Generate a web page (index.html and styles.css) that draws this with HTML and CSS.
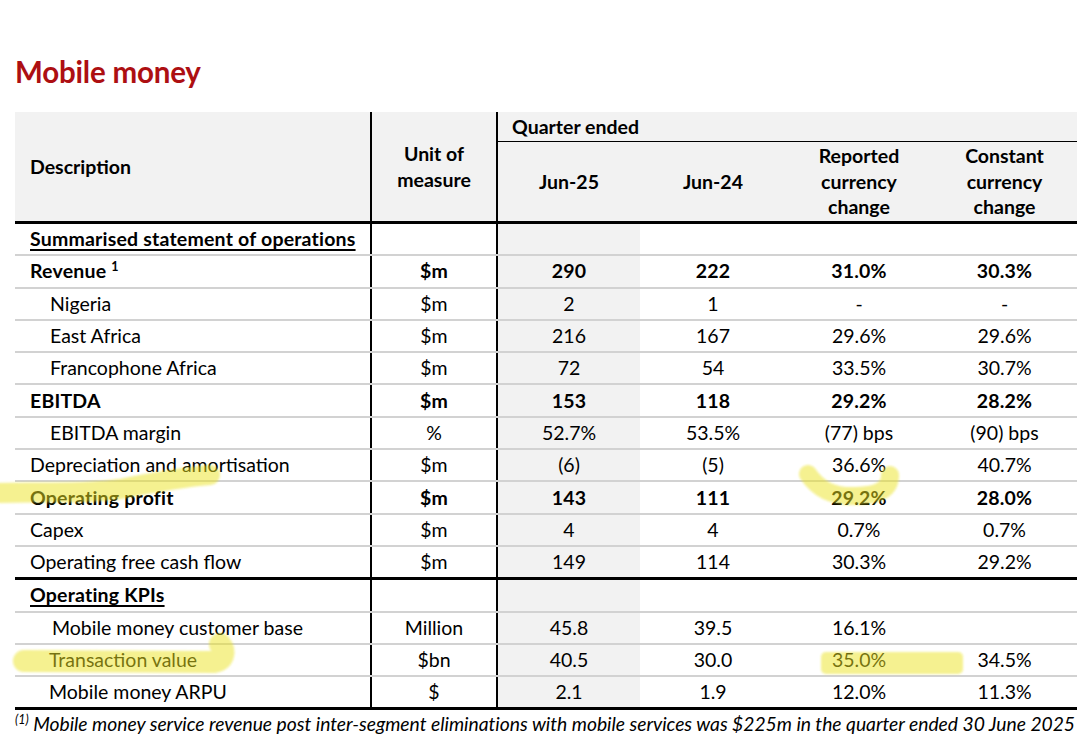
FILE: index.html
```html
<!DOCTYPE html>
<html>
<head>
<meta charset="utf-8">
<link rel="stylesheet" href="styles.css">
</head>
<body>
<div class="page">
  <h1 class="title">Mobile money</h1>
  <table class="mm">
    <colgroup>
      <col class="c-desc"><col class="c-unit"><col class="c-n"><col class="c-n2"><col class="c-n2"><col class="c-n3">
    </colgroup>
    <thead>
      <tr class="h1">
        <th rowspan="2" class="desc">Description</th>
        <th rowspan="2" class="unit">Unit of<br>measure</th>
        <th colspan="4" class="qe">Quarter ended</th>
      </tr>
      <tr class="h2">
        <th>Jun-25</th>
        <th>Jun-24</th>
        <th>Reported<br>currency<br>change</th>
        <th>Constant<br>currency<br>change</th>
      </tr>
    </thead>
    <tbody>
      <tr><td class="desc b"><span class="u">Summarised statement of operations</span></td><td class="unit"></td><td class="cur"></td><td></td><td></td><td></td></tr>
      <tr class="b"><td class="desc">Revenue <sup>1</sup></td><td class="unit">$m</td><td class="cur">290</td><td>222</td><td>31.0%</td><td>30.3%</td></tr>
      <tr><td class="desc ind">Nigeria</td><td class="unit">$m</td><td class="cur">2</td><td>1</td><td>-</td><td>-</td></tr>
      <tr><td class="desc ind">East Africa</td><td class="unit">$m</td><td class="cur">216</td><td>167</td><td>29.6%</td><td>29.6%</td></tr>
      <tr><td class="desc ind">Francophone Africa</td><td class="unit">$m</td><td class="cur">72</td><td>54</td><td>33.5%</td><td>30.7%</td></tr>
      <tr class="b"><td class="desc">EBITDA</td><td class="unit">$m</td><td class="cur">153</td><td>118</td><td>29.2%</td><td>28.2%</td></tr>
      <tr><td class="desc ind">EBITDA margin</td><td class="unit">%</td><td class="cur">52.7%</td><td>53.5%</td><td>(77) bps</td><td>(90) bps</td></tr>
      <tr><td class="desc">Depreciation and amortisation</td><td class="unit">$m</td><td class="cur">(6)</td><td>(5)</td><td>36.6%</td><td>40.7%</td></tr>
      <tr class="b"><td class="desc">Operating profit</td><td class="unit">$m</td><td class="cur">143</td><td>111</td><td>29.2%</td><td>28.0%</td></tr>
      <tr><td class="desc">Capex</td><td class="unit">$m</td><td class="cur">4</td><td>4</td><td>0.7%</td><td>0.7%</td></tr>
      <tr class="thick"><td class="desc">Operating free cash flow</td><td class="unit">$m</td><td class="cur">149</td><td>114</td><td>30.3%</td><td>29.2%</td></tr>
      <tr><td class="desc b"><span class="u">Operating KPIs</span></td><td class="unit"></td><td class="cur"></td><td></td><td></td><td></td></tr>
      <tr><td class="desc ind2">Mobile money customer base</td><td class="unit">Million</td><td class="cur">45.8</td><td>39.5</td><td>16.1%</td><td></td></tr>
      <tr><td class="desc ind3">Transaction value</td><td class="unit">$bn</td><td class="cur">40.5</td><td>30.0</td><td>35.0%</td><td>34.5%</td></tr>
      <tr class="thick"><td class="desc ind3">Mobile money ARPU</td><td class="unit">$</td><td class="cur">2.1</td><td>1.9</td><td>12.0%</td><td>11.3%</td></tr>
    </tbody>
  </table>
  <p class="note"><sup>(1)</sup> Mobile money service revenue post inter-segment eliminations with mobile services was $225m in the quarter ended 30 June 2025</p>

  <svg class="marks" width="1079" height="756" viewBox="0 0 1079 756">
    <defs><filter id="soft"><feGaussianBlur stdDeviation="1.2"/></filter></defs>
    <g filter="url(#soft)" fill="none" stroke="#ebe41e" stroke-opacity="0.5" stroke-linecap="round" stroke-linejoin="round">
      <path d="M -6 493 C 40 491, 80 495, 120 489 C 150 483, 185 477, 210 475" stroke-width="20"/>
      <path d="M 808 474 C 818 489, 832 497, 856 496 C 880 495, 890 489, 890 475" stroke-width="18"/>
      <path d="M 24 661 L 214 662 C 224 661, 226 651, 220 644" stroke-width="22"/>
      <rect x="821" y="652" width="142" height="22" rx="5" fill="#ebe41e" fill-opacity="0.5" stroke="none"/>
    </g>
  </svg>
</div>
</body>
</html>
```

FILE: styles.css
```css
html, body {
  margin: 0;
  padding: 0;
  background: #ffffff;
}
.page {
  position: relative;
  width: 1079px;
  height: 756px;
  overflow: hidden;
  padding-left: 15px;
  box-sizing: border-box;
  font-family: "Lato", "Open Sans", sans-serif;
  color: #000;
}
.title {
  margin: 0;
  padding-top: 54px;
  height: 58px;
  font-size: 29.5px;
  line-height: 36px;
  font-weight: 700;
  color: #ad0f12;
  letter-spacing: -0.2px;
}
.mm {
  border-collapse: collapse;
  table-layout: fixed;
  width: 1062px;
  font-size: 19.5px;
}
.c-desc { width: 356px; }
.c-unit { width: 126px; }
.c-n { width: 143px; }
.c-n2 { width: 146px; }
.c-n3 { width: 145px; }

.mm th {
  background: #f2f2f2;
  font-weight: 700;
  text-align: center;
  vertical-align: middle;
  line-height: 25.5px;
  padding: 0;
}
.mm thead tr.h1 th { height: 29px; }
.mm thead tr.h2 th { height: 79px; border-bottom: 3px solid #000; }
.mm thead th.desc { text-align: left; padding-left: 15px; border-right: 2px solid #000; border-bottom: 3px solid #000; }
.mm thead th.unit { border-right: 2px solid #000; border-bottom: 3px solid #000; }
.mm thead th.qe { text-align: left; padding-left: 14px; border-bottom: 1px solid #000; }

.mm td {
  height: 30.3px;
  padding: 0;
  text-align: center;
  vertical-align: middle;
  border-bottom: 2px solid #d2d2d2;
  line-height: 22px;
  white-space: nowrap;
}
.mm td.desc { text-align: left; padding-left: 15px; border-right: 2px solid #000; }
.mm td.unit { border-right: 2px solid #000; }
.mm td.cur { background: #f2f2f2; }
.mm td.ind { padding-left: 35px; }
.mm td.ind2 { padding-left: 37px; }
.mm td.ind3 { padding-left: 34px; }
.mm tr.b td, .mm td.b { font-weight: 700; letter-spacing: 0.2px; }
.mm tr.thick td { border-bottom: 3px solid #000; }
.u { text-decoration: underline; text-underline-offset: 3px; text-decoration-thickness: 1.5px; }
.mm sup { font-size: 12.5px; line-height: 0; vertical-align: 7px; }

.note {
  margin: 2px 0 0 0;
  font-style: italic;
  font-size: 19.3px;
  line-height: 24px;
  white-space: nowrap;
  letter-spacing: -0.02px;
}
.note sup { font-size: 12.5px; line-height: 0; vertical-align: 7px; }

.marks {
  position: absolute;
  left: 0;
  top: 0;
  pointer-events: none;
}
```
